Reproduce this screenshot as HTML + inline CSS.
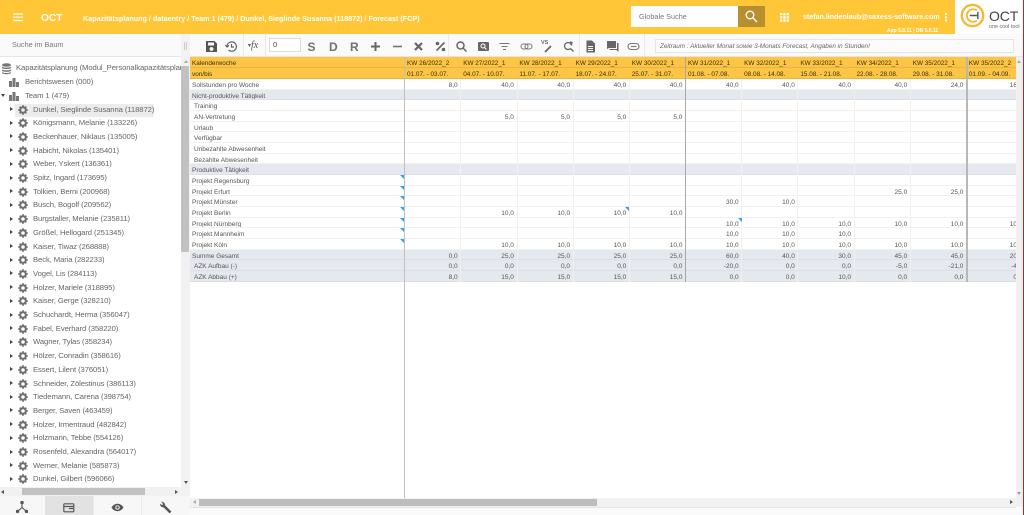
<!DOCTYPE html>
<html><head><meta charset="utf-8"><style>
*{box-sizing:border-box}
html,body{margin:0;padding:0;width:1024px;height:515px;overflow:hidden;background:#fff;font-family:"Liberation Sans",sans-serif}
.a{position:absolute}
.n{position:absolute;white-space:nowrap;font-size:7.700px;letter-spacing:-.1px;line-height:12px;color:#666;left:33px}
.n:before{content:"";position:absolute;left:-23px;top:3.500px;border-left:3.500px solid #444;border-top:2.500px solid transparent;border-bottom:2.500px solid transparent}
.n svg{position:absolute;left:-15.500px;top:1px;width:10px;height:10px}
.tl{font-size:7.700px;letter-spacing:-.1px;line-height:12px;color:#666;white-space:nowrap}
.r{position:absolute;left:190px;width:826px;height:10.67px;display:flex;font-size:6.500px;line-height:13.600px;color:#555;overflow:hidden;border-bottom:1px solid #f1f1f1}
.r b{font-weight:normal;display:block;width:214px;padding-left:2px;flex:none}
.r i{font-style:normal;display:block;width:56.2px;text-align:right;padding-right:2.500px;flex:none}
.g{background:#e5e8ee;border-bottom:1px solid #dcdfe5}
.s b{padding-left:4px}
.h{background:#fcc545;color:#3c3010;height:11px;border-bottom:1px solid #e8b53e;font-size:6.400px}
.h b{padding-left:2px}
.h i{text-align:left;padding:0 0 0 3px}
.v{position:absolute;top:79px;height:203px;width:1px;background:#f0f0f0}
.t{position:absolute;width:0;height:0;border-top:4px solid #29a9e0;border-left:4px solid transparent}
.ic{position:absolute;top:39.500px;width:13px;height:13px}
.l{position:absolute;top:40.500px;font-size:12px;line-height:13px;font-weight:bold;color:#707070}
</style></head><body>

<!-- header -->
<div class="a" style="left:0;top:0;width:1024px;height:34px;background:#ffc638"></div>
<svg class="a" style="left:13px;top:13px" width="11" height="9"><path d="M0 1h10M0 4.200h10M0 7.500h10" stroke="#fff" stroke-width="1.200"/></svg>
<div class="a" style="left:41px;top:12px;font-size:10.200px;line-height:14px;font-weight:bold;color:#fff">OCT</div>
<div class="a" style="left:83px;top:11.500px;font-size:7.200px;line-height:13px;font-weight:bold;color:#fff;white-space:nowrap">Kapazitätsplanung / dataentry / Team 1 (479) / Dunkel, Sieglinde Susanna (118872) / Forecast (FCP)</div>
<div class="a" style="left:631px;top:6px;width:107px;height:21px;background:#fff"></div>
<div class="a" style="left:639px;top:11px;font-size:7.300px;line-height:12px;color:#777">Globale Suche</div>
<div class="a" style="left:738px;top:6px;width:27px;height:21px;background:#b88f2f"></div>
<svg class="a" style="left:745px;top:10px" width="13" height="13" fill="none" stroke="#fff" stroke-width="1.300"><circle cx="5" cy="5" r="3.800"/><path d="M8 8l4 4"/></svg>
<svg class="a" style="left:780px;top:13px" width="9" height="10" fill="#fff"><path d="M0 0h2.300v2.300H0zM3.300 0h2.300v2.300H3.300zM6.600 0h2.300v2.300H6.600zM0 3.200h2.300v2.300H0zM3.300 3.200h2.300v2.300H3.300zM6.600 3.200h2.300v2.300H6.600zM0 6.400h2.300v2.300H0zM3.300 6.400h2.300v2.300H3.300zM6.600 6.400h2.300v2.300H6.600z"/></svg>
<div class="a" style="left:803px;top:11px;font-size:7.080px;line-height:12px;font-weight:bold;color:#fff;white-space:nowrap">stefan.lindenlaub@saxess-software.com</div>
<svg class="a" style="left:944px;top:12px" width="4" height="10" fill="#fff"><path d="M1 1h2v2H1zM1 4.200h2v2H1zM1 7.400h2v2H1z"/></svg>
<div class="a" style="left:887px;top:27.500px;font-size:5px;line-height:6px;font-weight:bold;color:#fff;white-space:nowrap">App 5.8.11 | DB 5.8.11</div>
<div class="a" style="left:955px;top:0;width:69px;height:34px;background:#fff"></div>
<svg class="a" style="left:959.500px;top:3px" width="25" height="25" viewBox="0 0 28 28" fill="none" stroke="#f7b731"><circle cx="14" cy="14" r="12" stroke-width="2.600"/><path d="M19 8.500a7 7 0 1 0 0 11" stroke-width="2"/><path d="M11 14h9M20 10v8" stroke="#555" stroke-width="1.600"/></svg>
<div class="a" style="left:989px;top:9px;font-size:14px;line-height:15px;color:#444;letter-spacing:-.1px">OCT</div>
<div class="a" style="left:989px;top:23.500px;font-size:5.400px;line-height:6px;color:#666;white-space:nowrap">one cool tool</div>

<!-- left search -->
<div class="a" style="left:0;top:34px;width:181px;height:23px;background:#fafafa;border-bottom:1px solid #e6e6e6"></div>
<div class="a" style="left:12px;top:39px;font-size:7.300px;line-height:12px;color:#777">Suche im Baum</div>

<!-- toolbar -->
<div class="a" style="left:181px;top:34px;width:843px;height:23px;background:#fafafa;border-bottom:1px solid #e4e4e4"></div>
<div class="a" style="left:181px;top:34px;width:9px;height:23px;background:#f3f3f3"></div>
<div class="a" style="left:184px;top:42px;width:3px;height:8px;border-left:1px solid #ccc;border-right:1px solid #ccc"></div>
<div class="a" style="left:243px;top:34px;width:1px;height:22px;background:#eaeaea"></div>
<div class="a" style="left:265px;top:34px;width:1px;height:22px;background:#eaeaea"></div>
<div class="a" style="left:448px;top:34px;width:1px;height:22px;background:#eaeaea"></div>
<div class="a" style="left:579px;top:34px;width:1px;height:22px;background:#eaeaea"></div>
<div class="a" style="left:644px;top:34px;width:1px;height:22px;background:#eaeaea"></div>

<svg class="ic" style="left:204.500px" viewBox="0 0 13 13" fill="#555"><path d="M1 1h8.500L12 3.500V12H1zM3 2.500v3h6v-3zM6.500 7a2 2 0 1 0 .01 0z"/></svg>
<svg class="ic" style="left:225px" viewBox="0 0 13 13" fill="none" stroke="#666" stroke-width="1.200"><path d="M2 6.500a4.700 4.700 0 1 1 1.500 3.500M.5 5l1.500 2L4 5.500M6.500 4v3h2.500"/></svg>
<div class="a" style="left:248px;top:40px;font-size:10px;line-height:12px;font-family:'Liberation Serif',serif;font-style:italic;color:#555"><span style="font-size:6px;font-style:normal;vertical-align:1px">▾</span>fx</div>
<div class="a" style="left:269px;top:38px;width:32px;height:14px;background:#fff;border:1px solid #ddd;font-size:7.500px;line-height:12px;padding-left:3px;color:#444">0</div>
<div class="l" style="left:307.500px">S</div>
<div class="l" style="left:329px">D</div>
<div class="l" style="left:350px">R</div>
<svg class="ic" style="left:369px" viewBox="0 0 13 13" stroke="#666" stroke-width="2"><path d="M2 6.500h9M6.500 2v9"/></svg>
<svg class="ic" style="left:390.500px" viewBox="0 0 13 13" stroke="#777" stroke-width="1.600"><path d="M2 6.500h9"/></svg>
<svg class="ic" style="left:411.500px" viewBox="0 0 13 13" stroke="#666" stroke-width="2.200"><path d="M3 3l7 7M10 3l-7 7"/></svg>
<svg class="ic" style="left:433.500px" viewBox="0 0 13 13" stroke="#666" fill="#666" stroke-width="1.600"><path d="M10.500 2.500l-8 8" /><circle cx="3.500" cy="3.500" r="1"/><circle cx="9.500" cy="9.500" r="1"/></svg>
<svg class="ic" style="left:455px" viewBox="0 0 13 13" fill="none" stroke="#666" stroke-width="1.500"><circle cx="5.500" cy="5.500" r="3.500"/><path d="M8 8l3.500 3.500"/></svg>
<svg class="ic" style="left:476.500px" viewBox="0 0 13 13"><rect x="1" y="2" width="11" height="9" rx="1" fill="#666"/><circle cx="6" cy="6" r="2" fill="none" stroke="#fff" stroke-width="1"/><path d="M7.500 7.500l2 2" stroke="#fff"/></svg>
<svg class="ic" style="left:498px" viewBox="0 0 13 13" stroke="#777" stroke-width="1"><path d="M1.500 3.500h10M3.500 6.500h6M5 9.500h3"/></svg>
<svg class="ic" style="left:519.500px" viewBox="0 0 13 13" fill="none" stroke="#777" stroke-width="1"><rect x="1" y="4" width="7" height="5" rx="2.500"/><rect x="5" y="4" width="7" height="5" rx="2.500"/></svg>
<div class="a" style="left:541px;top:40px;font-size:5.500px;line-height:7px;font-weight:bold;color:#666">VS</div>
<svg class="ic" style="left:542px" viewBox="0 0 13 13" stroke="#666" stroke-width="1.800"><path d="M3 12l6-6"/></svg>
<svg class="ic" style="left:562px" viewBox="0 0 13 13" fill="none" stroke="#666" stroke-width="1.300"><path d="M9.500 5.500a3.500 3.500 0 1 0-1 3M8.500 8.500l3 3M8 2l2 .5-.5 2"/></svg>
<svg class="ic" style="left:584px" viewBox="0 0 13 13" fill="#666"><path d="M2.500 .5h5.500l3 3v9h-8.500zM4 6v1h5V6zM4 8v1h5V8zM4 10v1h5v-1z"/></svg>
<svg class="ic" style="left:605.500px" viewBox="0 0 13 13" fill="#666"><path d="M1 1h9v7H3L1 9zM11 3h1.500v9L10.500 10H3.500V9h7.500z"/></svg>
<svg class="ic" style="left:626.500px" viewBox="0 0 13 13" fill="none" stroke="#777" stroke-width="1.100"><rect x="1" y="3.500" width="11" height="6" rx="3"/><path d="M4 6.500h5.500"/></svg>
<div class="a" style="left:655px;top:38.500px;width:359px;height:14.500px;background:#fcfcfc;border:1px solid #e5e5e5;font-size:6.370px;line-height:13px;padding-left:4px;font-style:italic;color:#666;white-space:nowrap">Zeitraum : Aktueller Monat sowie 3-Monats Forecast, Angaben in Stunden!</div>

<!-- tree -->
<div class="a" style="left:0;top:57px;width:181px;height:430px;background:#fff"></div>
<svg class="a" style="left:1px;top:63px" width="11" height="12" fill="#777"><ellipse cx="5.500" cy="2" rx="4.500" ry="1.800"/><path d="M1 3.500c1 1.500 8 1.500 9 0v1.500c-1 1.500-8 1.500-9 0zM1 6.200c1 1.500 8 1.500 9 0v1.500c-1 1.500-8 1.500-9 0zM1 8.900c1 1.500 8 1.500 9 0v1c-1 1.800-8 1.800-9 0z"/></svg>
<div class="a tl" style="left:16px;top:62px;width:165px;overflow:hidden">Kapazitätsplanung (Modul_Personalkapazitätsplanung)</div>
<svg class="a" style="left:9px;top:77px" width="10" height="10" fill="#777"><path d="M0 4h3v6H0zM3.500 1h3v9h-3zM7 5h3v5H7z"/></svg>
<div class="a tl" style="left:25px;top:76px">Berichtswesen (000)</div>
<div class="a" style="left:1px;top:94px;border-top:3.500px solid #444;border-left:2.500px solid transparent;border-right:2.500px solid transparent"></div>
<svg class="a" style="left:9px;top:91px" width="10" height="10" fill="#777"><path d="M0 4h3v6H0zM3.500 1h3v9h-3zM7 5h3v5H7z"/></svg>
<div class="a tl" style="left:25px;top:90px">Team 1 (479)</div>
<div class="a" style="left:15px;top:103.500px;width:139px;height:13.500px;background:#ececec"></div>
<svg width="0" height="0" class="a"><defs><g id="gr"><circle cx="5" cy="5" r="2.800" fill="none" stroke="#6e6e6e" stroke-width="2"/><path d="M5 .3v2M5 7.700v2M.3 5h2M7.700 5h2M1.700 1.700l1.400 1.400M6.900 6.900l1.400 1.400M1.700 8.300l1.400-1.400M6.900 3.100l1.400-1.400" stroke="#6e6e6e" stroke-width="1.700"/></g></defs></svg>
<div class="n" style="top:103.500px"><svg><use href="#gr"/></svg>Dunkel, Sieglinde Susanna (118872)</div>
<div class="n" style="top:117.200px"><svg><use href="#gr"/></svg>Königsmann, Melanie (133226)</div>
<div class="n" style="top:130.900px"><svg><use href="#gr"/></svg>Beckenhauer, Niklaus (135005)</div>
<div class="n" style="top:144.600px"><svg><use href="#gr"/></svg>Habicht, Nikolas (135401)</div>
<div class="n" style="top:158.300px"><svg><use href="#gr"/></svg>Weber, Yskert (136361)</div>
<div class="n" style="top:172px"><svg><use href="#gr"/></svg>Spitz, Ingard (173695)</div>
<div class="n" style="top:185.700px"><svg><use href="#gr"/></svg>Tolkien, Berni (200968)</div>
<div class="n" style="top:199.400px"><svg><use href="#gr"/></svg>Busch, Bogolf (209562)</div>
<div class="n" style="top:213.100px"><svg><use href="#gr"/></svg>Burgstaller, Melanie (235811)</div>
<div class="n" style="top:226.800px"><svg><use href="#gr"/></svg>Größel, Hellogard (251345)</div>
<div class="n" style="top:240.500px"><svg><use href="#gr"/></svg>Kaiser, Tiwaz (268888)</div>
<div class="n" style="top:254.200px"><svg><use href="#gr"/></svg>Beck, Maria (282233)</div>
<div class="n" style="top:267.900px"><svg><use href="#gr"/></svg>Vogel, Lis (284113)</div>
<div class="n" style="top:281.600px"><svg><use href="#gr"/></svg>Holzer, Mariele (318895)</div>
<div class="n" style="top:295.300px"><svg><use href="#gr"/></svg>Kaiser, Gerge (328210)</div>
<div class="n" style="top:309px"><svg><use href="#gr"/></svg>Schuchardt, Herma (356047)</div>
<div class="n" style="top:322.700px"><svg><use href="#gr"/></svg>Fabel, Everhard (358220)</div>
<div class="n" style="top:336.400px"><svg><use href="#gr"/></svg>Wagner, Tylas (358234)</div>
<div class="n" style="top:350.100px"><svg><use href="#gr"/></svg>Hölzer, Conradin (358616)</div>
<div class="n" style="top:363.800px"><svg><use href="#gr"/></svg>Essert, Lilent (376051)</div>
<div class="n" style="top:377.500px"><svg><use href="#gr"/></svg>Schneider, Zölestinus (386113)</div>
<div class="n" style="top:391.200px"><svg><use href="#gr"/></svg>Tiedemann, Carena (398754)</div>
<div class="n" style="top:404.900px"><svg><use href="#gr"/></svg>Berger, Saven (463459)</div>
<div class="n" style="top:418.600px"><svg><use href="#gr"/></svg>Holzer, Irmentraud (482842)</div>
<div class="n" style="top:432.300px"><svg><use href="#gr"/></svg>Holzmann, Tebbe (554126)</div>
<div class="n" style="top:446px"><svg><use href="#gr"/></svg>Rosenfeld, Alexandra (564017)</div>
<div class="n" style="top:459.700px"><svg><use href="#gr"/></svg>Werner, Melanie (585873)</div>
<div class="n" style="top:473.400px"><svg><use href="#gr"/></svg>Dunkel, Gilbert (596066)</div>

<!-- tree scrollbars -->
<div class="a" style="left:181px;top:57px;width:9px;height:439px;background:#f1f1f1"></div>
<div class="a" style="left:181px;top:66px;width:8px;height:186px;background:#c1c1c1"></div>
<div class="a" style="left:183.500px;top:60px;border-bottom:3px solid #aaa;border-left:2.500px solid transparent;border-right:2.500px solid transparent"></div>
<div class="a" style="left:183.500px;top:481px;border-top:3px solid #555;border-left:2.500px solid transparent;border-right:2.500px solid transparent"></div>
<div class="a" style="left:0;top:487px;width:181px;height:9px;background:#f1f1f1"></div>
<div class="a" style="left:22px;top:488px;width:123px;height:7px;background:#c1c1c1"></div>
<div class="a" style="left:1px;top:489.500px;border-right:3px solid #555;border-top:2.500px solid transparent;border-bottom:2.500px solid transparent"></div>
<div class="a" style="left:175px;top:489.500px;border-left:3px solid #555;border-top:2.500px solid transparent;border-bottom:2.500px solid transparent"></div>

<!-- bottom tabs -->
<div class="a" style="left:0;top:496px;width:190px;height:19px;background:#f7f7f7"></div>
<div class="a" style="left:45px;top:496px;width:48px;height:19px;background:#e2e2e2"></div>
<div class="a" style="left:93px;top:496px;width:1px;height:19px;background:#eaeaea"></div>
<div class="a" style="left:141px;top:496px;width:1px;height:19px;background:#eaeaea"></div>
<svg class="a" style="left:16px;top:501px" width="12" height="12" fill="none" stroke="#555" stroke-width="1.100"><path d="M6 1v5.500L1.500 10.500M6 6.500l4.500 4"/><circle cx="6" cy="1.500" r="1.200" fill="#555"/><circle cx="1.500" cy="10.500" r="1.200" fill="#555"/><circle cx="10.500" cy="10.500" r="1.200" fill="#555"/></svg>
<svg class="a" style="left:63px;top:503px" width="12" height="11" fill="none" stroke="#555" stroke-width="1.200"><rect x=".8" y=".8" width="10" height="8" rx=".8"/><path d="M.8 3.500h10M6 5.500h4" /></svg>
<svg class="a" style="left:111px;top:503px" width="13" height="10"><path d="M.5 4.500C3.500-.5 9.500-.5 12.500 4.500 9.500 9.500 3.500 9.500.5 4.500z" fill="#555"/><circle cx="6.500" cy="4.500" r="2.300" fill="#e8e8e8"/><circle cx="6.500" cy="4.500" r="1.200" fill="#555"/></svg>
<svg class="a" style="left:159px;top:501px" width="13" height="13" stroke="#555" fill="none"><path d="M11.500 11.500l-6-6" stroke-width="2.600"/><path d="M1.500 3.500c.3 2 2 3 4 2.200.9-2-.3-4-2.300-4.500l1.500 2-1.500 1.500z" fill="#555" stroke-width=".8"/></svg>

<!-- grid -->
<div class="r h" style="top:57px"><b>Kalenderwoche</b><i>KW 26/2022_2</i><i>KW 27/2022_1</i><i>KW 28/2022_1</i><i>KW 29/2022_1</i><i>KW 30/2022_1</i><i>KW 31/2022_1</i><i>KW 32/2022_1</i><i>KW 33/2022_1</i><i>KW 34/2022_1</i><i>KW 35/2022_1</i><i>KW 35/2022_2</i></div>
<div class="r h" style="top:68px"><b>von/bis</b><i>01.07. - 03.07.</i><i>04.07. - 10.07.</i><i>11.07. - 17.07.</i><i>18.07. - 24.07.</i><i>25.07. - 31.07.</i><i>01.08. - 07.08.</i><i>08.08. - 14.08.</i><i>15.08. - 21.08.</i><i>22.08. - 28.08.</i><i>29.08. - 31.08.</i><i>01.09. - 04.09.</i></div>
<div class="r" style="top:79px"><b>Sollstunden pro Woche</b><i>8,0</i><i>40,0</i><i>40,0</i><i>40,0</i><i>40,0</i><i>40,0</i><i>40,0</i><i>40,0</i><i>40,0</i><i>24,0</i><i style="width:59px">16,0</i></div>
<div class="r g" style="top:89.670px"><b>Nicht-produktive Tätigkeit</b></div>
<div class="r s" style="top:100.340px"><b>Training</b></div>
<div class="r s" style="top:111px"><b>AN-Vertretung</b><i></i><i>5,0</i><i>5,0</i><i>5,0</i><i>5,0</i></div>
<div class="r s" style="top:121.680px"><b>Urlaub</b></div>
<div class="r s" style="top:132.350px"><b>Verfügbar</b></div>
<div class="r s" style="top:143px"><b>Unbezahlte Abwesenheit</b></div>
<div class="r s" style="top:153.700px"><b>Bezahlte Abwesenheit</b></div>
<div class="r g" style="top:164.350px"><b>Produktive Tätigkeit</b></div>
<div class="r" style="top:175px"><b>Projekt Regensburg</b></div>
<div class="r" style="top:185.700px"><b>Projekt Erfurt</b><i></i><i></i><i></i><i></i><i></i><i></i><i></i><i></i><i>25,0</i><i>25,0</i></div>
<div class="r" style="top:196.350px"><b>Projekt Münster</b><i></i><i></i><i></i><i></i><i></i><i>30,0</i><i>10,0</i></div>
<div class="r" style="top:207px"><b>Projekt Berlin</b><i></i><i>10,0</i><i>10,0</i><i>10,0</i><i>10,0</i></div>
<div class="r" style="top:217.700px"><b>Projekt Nürnberg</b><i></i><i></i><i></i><i></i><i></i><i>10,0</i><i>10,0</i><i>10,0</i><i>10,0</i><i>10,0</i><i style="width:59px">10,0</i></div>
<div class="r" style="top:228.350px"><b>Projekt Mannheim</b><i></i><i></i><i></i><i></i><i></i><i>10,0</i><i>10,0</i><i>10,0</i></div>
<div class="r" style="top:239px"><b>Projekt Köln</b><i></i><i>10,0</i><i>10,0</i><i>10,0</i><i>10,0</i><i>10,0</i><i>10,0</i><i>10,0</i><i>10,0</i><i>10,0</i><i style="width:59px">10,0</i></div>
<div class="r g" style="top:249.700px"><b>Summe Gesamt</b><i>0,0</i><i>25,0</i><i>25,0</i><i>25,0</i><i>25,0</i><i>60,0</i><i>40,0</i><i>30,0</i><i>45,0</i><i>45,0</i><i style="width:59px">20,0</i></div>
<div class="r g s" style="top:260.350px"><b>AZK Aufbau (-)</b><i>0,0</i><i>0,0</i><i>0,0</i><i>0,0</i><i>0,0</i><i>-20,0</i><i>0,0</i><i>0,0</i><i>-5,0</i><i>-21,0</i><i style="width:59px">-4,0</i></div>
<div class="r g s" style="top:271px"><b>AZK Abbau (+)</b><i>8,0</i><i>15,0</i><i>15,0</i><i>15,0</i><i>15,0</i><i>0,0</i><i>0,0</i><i>10,0</i><i>0,0</i><i>0,0</i><i style="width:59px">0,0</i></div>

<!-- vertical lines -->
<div class="v" style="left:460px"></div><div class="v" style="left:517px"></div><div class="v" style="left:573px"></div><div class="v" style="left:629px"></div><div class="v" style="left:741px"></div><div class="v" style="left:797px"></div><div class="v" style="left:854px"></div><div class="v" style="left:910px"></div>
<div class="a" style="left:404px;top:57px;width:1px;height:441px;background:#c0c0c0"></div>
<div class="a" style="left:685px;top:57px;width:1px;height:225px;background:#a8a8a8"></div>
<div class="a" style="left:966px;top:57px;width:1.500px;height:225px;background:#b8b8b8"></div>

<!-- triangles -->
<div class="t" style="left:400px;top:175px"></div><div class="t" style="left:400px;top:185.700px"></div><div class="t" style="left:400px;top:196.400px"></div><div class="t" style="left:400px;top:207px"></div><div class="t" style="left:400px;top:217.700px"></div><div class="t" style="left:400px;top:228.400px"></div><div class="t" style="left:400px;top:239px"></div>
<div class="t" style="left:625px;top:207px"></div><div class="t" style="left:738px;top:217.700px"></div>

<!-- main scrollbars -->
<div class="a" style="left:1016px;top:57px;width:7px;height:450px;background:#f1f1f1"></div>
<div class="a" style="left:1017px;top:60px;border-bottom:3px solid #aaa;border-left:2.500px solid transparent;border-right:2.500px solid transparent"></div>
<div class="a" style="left:1017px;top:492px;border-top:3px solid #999;border-left:2.500px solid transparent;border-right:2.500px solid transparent"></div>
<div class="a" style="left:190px;top:498px;width:826px;height:10px;background:#f1f1f1;border-bottom:1px solid #e4e4e4"></div>
<div class="a" style="left:199px;top:499px;width:398px;height:7px;background:#bdbdbd"></div>
<div class="a" style="left:193px;top:500px;border-right:3px solid #aaa;border-top:2.500px solid transparent;border-bottom:2.500px solid transparent"></div>
<div class="a" style="left:1010px;top:500px;border-left:3px solid #555;border-top:2.500px solid transparent;border-bottom:2.500px solid transparent"></div>
<div class="a" style="left:190px;top:508px;width:833px;height:7px;background:#fafafa"></div>
<div class="a" style="left:1023px;top:0;width:1px;height:515px;background:#c4202e"></div>
</body></html>
